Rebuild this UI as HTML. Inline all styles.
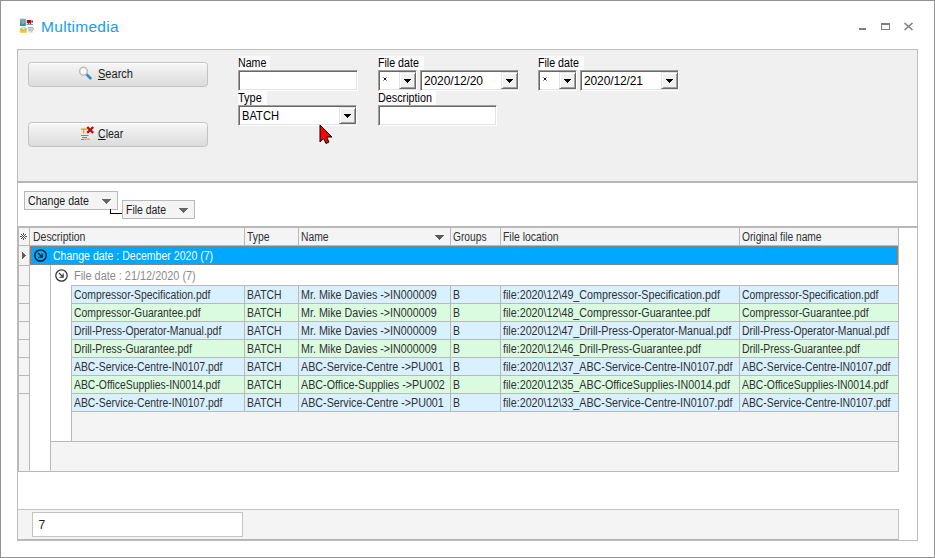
<!DOCTYPE html>
<html><head><meta charset="utf-8">
<style>
*{margin:0;padding:0;box-sizing:border-box}
html,body{width:935px;height:558px;overflow:hidden;background:#fff}
body{position:relative;font-family:"Liberation Sans",sans-serif;font-size:11px;color:#1b1b1b}
.a{position:absolute}
u{text-underline-offset:1px}
.t{position:absolute;white-space:nowrap;line-height:13px}
#win{left:0;top:0;width:935px;height:558px;border:1px solid #939393}
#title{left:41px;top:16.5px;font-size:15.5px;line-height:20px;color:#12a0ea;letter-spacing:0.3px}
.ctl{background:#7f7f7f}
#panel{left:17px;top:49px;width:901px;height:492px;border:1px solid #bdbdbd;background:#fff}
#filter{left:18px;top:50px;width:899px;height:133px;background:#f0f0f0;border-bottom:2px solid #b7b7b7}
.btn{position:absolute;width:180px;height:25px;border:1px solid #c2c2c2;border-radius:3.5px;background:linear-gradient(#f7f7f7,#eaeaea 45%,#dcdcdc);box-shadow:inset 0 1px #fff}
.lbl{position:absolute;white-space:nowrap;background:#fcfcfc;height:14px;line-height:13px;padding-top:1px;color:#000}
.inp{position:absolute;background:#fff;border:1px solid;border-color:#a0a0a0 #fff #fff #a0a0a0;box-shadow:inset 1px 1px #696969,inset -1px -1px #e3e3e3}
.dd{position:absolute;top:1px;right:0;width:17px;height:17px;background:#f0f0f0;border:1px solid;border-color:#e3e3e3 #696969 #696969 #e3e3e3;box-shadow:inset 1px 1px #fff,inset -1px -1px #a0a0a0}
.dd:after{content:"";position:absolute;left:4px;top:6px;width:7px;height:4px;background:linear-gradient(#000,#000) 0 0/7px 1px no-repeat,linear-gradient(#000,#000) 1px 1px/5px 1px no-repeat,linear-gradient(#000,#000) 2px 2px/3px 1px no-repeat,linear-gradient(#000,#000) 3px 3px/1px 1px no-repeat}
.gt{color:#1b1b1b;letter-spacing:-0.25px}
.sc{display:inline-block;font-size:11.5px;transform-origin:0 0}
.gs{color:#303030;font-size:12px;transform-origin:0 0}
.gb{position:absolute;height:19px;background:#f4f4f4;border:1px solid #b9b9b9}
.ar{position:absolute;top:7px;width:9px;height:5px;background:linear-gradient(#666,#666) 0px 0px/9px 1px no-repeat,linear-gradient(#666,#666) 1px 1px/7px 1px no-repeat,linear-gradient(#666,#666) 2px 2px/5px 1px no-repeat,linear-gradient(#666,#666) 3px 3px/3px 1px no-repeat,linear-gradient(#666,#666) 4px 4px/1px 1px no-repeat}
</style></head><body>
<div id="win" class="a"></div>
<!-- title icon -->
<svg class="a" style="left:18px;top:16px" width="20" height="20" viewBox="0 0 20 20">
<defs><linearGradient id="tb" x1="0" y1="0" x2="0" y2="1"><stop offset="0" stop-color="#6ab8e6"/><stop offset="1" stop-color="#2c79bd"/></linearGradient></defs>
<rect x="2" y="2.7" width="5.8" height="7.2" fill="url(#tb)"/><ellipse cx="5" cy="6.2" rx="1.2" ry="2.3" fill="#7cc63a"/>
<rect x="8.8" y="4" width="4.6" height="3.2" fill="#b00808"/><path d="M13.4 5.6 L15 4.2 V7 Z" fill="#b00808"/>
<rect x="10" y="7.2" width="1" height="1" fill="#b00808"/><rect x="12" y="7.2" width="1" height="1" fill="#b00808"/>
<rect x="8.5" y="8.1" width="6.5" height="0.8" fill="#3b8fd0"/>
<rect x="2" y="12.2" width="6.8" height="4.6" fill="#f4c53e"/><path d="M2 12.2 L5.4 14.8 L8.8 12.2" fill="none" stroke="#e0a820" stroke-width="0.6"/>
<circle cx="5.6" cy="12.4" r="1.7" fill="#dfeaf4" stroke="#7fa6cc" stroke-width="0.5"/>
<rect x="9.7" y="11.2" width="5.3" height="5.4" fill="#dde3ea"/><rect x="9.7" y="11.2" width="5.3" height="1" fill="#6eaadc"/>
<rect x="10.5" y="13" width="3" height="0.6" fill="#9ab"/><rect x="10.5" y="14.4" width="3" height="0.6" fill="#9ab"/>
<path d="M15.6 12.5 L13 15.6 L12.6 16.4 L13.5 16 L16.1 13 Z" fill="#f0a830"/><path d="M15.4 12.4 L16.2 13.1" stroke="#c84040" stroke-width="0.8"/>
</svg>
<div id="title" class="t">Multimedia</div>
<div class="a ctl" style="left:859px;top:28px;width:7px;height:2px"></div>
<div class="a" style="left:881px;top:23px;width:9px;height:7px;border:1px solid #7f7f7f;border-top-width:2px"></div>
<svg class="a" style="left:903px;top:22px" width="11" height="9" viewBox="0 0 11 9"><path d="M1.5 1 L9.5 8 M9.5 1 L1.5 8" stroke="#7f7f7f" stroke-width="1.6"/></svg>

<div id="panel" class="a"></div>
<div id="filter" class="a"></div>

<!-- buttons -->
<div class="btn" style="left:28px;top:62px"></div>
<svg class="a" style="left:76px;top:62px" width="20" height="20" viewBox="0 0 20 20">
<circle cx="7.5" cy="9.2" r="3.9" fill="#f7f8f9" stroke="#bdbdbd" stroke-width="1.6"/>
<path d="M10.6 12.4 L15.2 17" stroke="#2f8ec4" stroke-width="2.6"/></svg>
<div class="t" style="left:98px;top:68px;color:#1b1b1b"><span class="sc" style="transform:scaleX(0.92);font-size:12px"><u>S</u>earch</span></div>
<div class="btn" style="left:28px;top:122px"></div>
<svg class="a" style="left:80px;top:125px" width="16" height="16" viewBox="0 0 16 16">
<rect x="0.5" y="3" width="10.5" height="12" fill="#e6eaee"/>
<rect x="1" y="3.5" width="6.5" height="1.4" fill="#f0a020"/><rect x="3" y="4.5" width="1.3" height="4" fill="#f0a020"/>
<rect x="1" y="10" width="7.5" height="1" fill="#3d97d8"/><rect x="2" y="12" width="5" height="1" fill="#3d97d8"/>
<rect x="1" y="14" width="3" height="1" fill="#3d97d8"/><rect x="4" y="13.5" width="6" height="1.5" fill="#f0b030"/>
<path d="M7.2 2 L13.2 7.8 M13.2 2 L7.2 7.8" stroke="#b81414" stroke-width="2.4"/></svg>
<div class="t" style="left:98px;top:128px;color:#1b1b1b"><span class="sc" style="transform:scaleX(0.88);font-size:12px"><u>C</u>lear</span></div>

<!-- labels & inputs -->
<div class="lbl" style="left:238px;top:56px;width:32px"><span class="sc" style="transform:scaleX(0.887);font-size:12px">Name</span></div>
<div class="inp" style="left:238px;top:70px;width:120px;height:21px"></div>
<div class="lbl" style="left:238px;top:91px;width:29px"><span class="sc" style="transform:scaleX(0.915);font-size:12px">Type</span></div>
<div class="inp" style="left:238px;top:105px;width:119px;height:21px"><div class="t" style="left:3px;top:4px;color:#000"><span class="sc" style="transform:scaleX(0.93);font-size:12px">BATCH</span></div><div class="dd"></div></div>

<div class="lbl" style="left:378px;top:56px;width:46px"><span class="sc" style="transform:scaleX(0.887);font-size:12px">File date</span></div>
<div class="inp" style="left:378px;top:70px;width:39px;height:21px"><svg class="a" style="left:4px;top:6px" width="4" height="4" viewBox="0 0 4 4"><path d="M0.5 0.5L3.5 3.5M3.5 0.5L0.5 3.5" stroke="#000" stroke-width="0.9"/></svg><div class="dd"></div></div>
<div class="inp" style="left:420px;top:70px;width:99px;height:21px"><div class="t" style="left:3px;top:3.5px;color:#000;font-size:12px;letter-spacing:-0.12px">2020/12/20</div><div class="dd"></div></div>
<div class="lbl" style="left:378px;top:91px;width:58px"><span class="sc" style="transform:scaleX(0.90);font-size:12px">Description</span></div>
<div class="inp" style="left:378px;top:105px;width:119px;height:21px"></div>

<div class="lbl" style="left:538px;top:56px;width:46px"><span class="sc" style="transform:scaleX(0.887);font-size:12px">File date</span></div>
<div class="inp" style="left:538px;top:70px;width:39px;height:21px"><svg class="a" style="left:4px;top:6px" width="4" height="4" viewBox="0 0 4 4"><path d="M0.5 0.5L3.5 3.5M3.5 0.5L0.5 3.5" stroke="#000" stroke-width="0.9"/></svg><div class="dd"></div></div>
<div class="inp" style="left:580px;top:70px;width:99px;height:21px"><div class="t" style="left:3px;top:3.5px;color:#000;font-size:12px;letter-spacing:-0.12px">2020/12/21</div><div class="dd"></div></div>

<!-- cursor -->
<svg class="a" style="left:319px;top:124px" width="16" height="21" viewBox="0 0 16 21">
<path d="M1 1 L13 13 L7.5 13 L10 18 L7 19.5 L4.5 14.5 L1 18 Z" fill="#ff0000" stroke="#000" stroke-width="1"/></svg>

<!-- group by -->
<div class="gb" style="left:24px;top:191px;width:94px"><i class="ar" style="left:77px"></i><div class="t" style="left:3px;top:3px"><span class="sc" style="transform:scaleX(0.885);font-size:12px">Change date</span></div></div>
<div class="a" style="left:110px;top:209px;width:13px;height:5px;border-left:1px solid #000;border-bottom:1px solid #000"></div>
<div class="gb" style="left:122px;top:200px;width:73px"><i class="ar" style="left:56px"></i><div class="t" style="left:3px;top:3px"><span class="sc" style="transform:scaleX(0.87);font-size:12px">File date</span></div></div>

<!-- grid placeholder -->
<!-- GRID START -->
<div class="a" style="left:17px;top:226px;width:901px;height:2px;background:#b9b9b9"></div>
<div class="a" style="left:17px;top:226px;width:2px;height:246px;background:#b9b9b9"></div>
<div class="a" style="left:19px;top:228px;width:880px;height:18px;background:#b9b9b9"></div>
<div class="a" style="left:19px;top:228px;width:10px;height:17px;background:#f4f4f4"></div>
<div class="a" style="left:30px;top:228px;width:214px;height:17px;background:#f4f4f4"></div>
<div class="a" style="left:245px;top:228px;width:53px;height:17px;background:#f4f4f4"></div>
<div class="a" style="left:299px;top:228px;width:151px;height:17px;background:#f4f4f4"></div>
<div class="a" style="left:451px;top:228px;width:49px;height:17px;background:#f4f4f4"></div>
<div class="a" style="left:501px;top:228px;width:238px;height:17px;background:#f4f4f4"></div>
<div class="a" style="left:740px;top:228px;width:158px;height:17px;background:#f4f4f4"></div>
<div class="t gs" style="left:33px;top:231px;transform:scaleX(0.8727);">Description</div>
<div class="t gs" style="left:247px;top:231px;transform:scaleX(0.8621);">Type</div>
<div class="t gs" style="left:301px;top:231px;transform:scaleX(0.8616);">Name</div>
<div class="t gs" style="left:453px;top:231px;transform:scaleX(0.8513);">Groups</div>
<div class="t gs" style="left:503px;top:231px;transform:scaleX(0.8657);">File location</div>
<div class="t gs" style="left:742px;top:231px;transform:scaleX(0.8519);">Original file name</div>
<i class="a" style="left:435px;top:235px;width:9px;height:5px;background:linear-gradient(#5a5a5a,#5a5a5a) 0px 0px/9px 1px no-repeat,linear-gradient(#5a5a5a,#5a5a5a) 1px 1px/7px 1px no-repeat,linear-gradient(#5a5a5a,#5a5a5a) 2px 2px/5px 1px no-repeat,linear-gradient(#5a5a5a,#5a5a5a) 3px 3px/3px 1px no-repeat,linear-gradient(#5a5a5a,#5a5a5a) 4px 4px/1px 1px no-repeat"></i>
<svg class="a" style="left:20px;top:233px" width="7" height="7" viewBox="0 0 7 7" fill="#505050"><rect x="3" y="0" width="1" height="1"/><rect x="1" y="1" width="1" height="1"/><rect x="3" y="1" width="1" height="1"/><rect x="5" y="1" width="1" height="1"/><rect x="2" y="2" width="1" height="1"/><rect x="4" y="2" width="1" height="1"/><rect x="0" y="3" width="1" height="1"/><rect x="1" y="3" width="1" height="1"/><rect x="3" y="3" width="1" height="1"/><rect x="5" y="3" width="1" height="1"/><rect x="6" y="3" width="1" height="1"/><rect x="2" y="4" width="1" height="1"/><rect x="4" y="4" width="1" height="1"/><rect x="1" y="5" width="1" height="1"/><rect x="3" y="5" width="1" height="1"/><rect x="5" y="5" width="1" height="1"/><rect x="3" y="6" width="1" height="1"/></svg>
<div class="a" style="left:19px;top:246px;width:11px;height:225px;background:#b9b9b9"></div>
<div class="a" style="left:19px;top:246px;width:10px;height:19px;background:#f4f4f4"></div>
<div class="a" style="left:19px;top:266px;width:10px;height:19px;background:#f4f4f4"></div>
<div class="a" style="left:19px;top:286px;width:10px;height:17px;background:#f4f4f4"></div>
<div class="a" style="left:19px;top:304px;width:10px;height:17px;background:#f4f4f4"></div>
<div class="a" style="left:19px;top:322px;width:10px;height:17px;background:#f4f4f4"></div>
<div class="a" style="left:19px;top:340px;width:10px;height:17px;background:#f4f4f4"></div>
<div class="a" style="left:19px;top:358px;width:10px;height:17px;background:#f4f4f4"></div>
<div class="a" style="left:19px;top:376px;width:10px;height:17px;background:#f4f4f4"></div>
<div class="a" style="left:19px;top:394px;width:10px;height:77px;background:#f4f4f4"></div>
<i class="a" style="left:22px;top:252px;width:4px;height:7px;background:linear-gradient(#5f5f5f,#5f5f5f) 0px 0px/1px 1px no-repeat,linear-gradient(#5f5f5f,#5f5f5f) 0px 1px/2px 1px no-repeat,linear-gradient(#5f5f5f,#5f5f5f) 0px 2px/3px 1px no-repeat,linear-gradient(#5f5f5f,#5f5f5f) 0px 3px/4px 1px no-repeat,linear-gradient(#5f5f5f,#5f5f5f) 0px 4px/3px 1px no-repeat,linear-gradient(#5f5f5f,#5f5f5f) 0px 5px/2px 1px no-repeat,linear-gradient(#5f5f5f,#5f5f5f) 0px 6px/1px 1px no-repeat"></i>
<div class="a" style="left:30px;top:246px;width:868px;height:19px;background:#00a8ff;border:1px dotted #f26a1b"></div>
<div class="a" style="left:30px;top:265px;width:868px;height:206px;background:#fff"></div>
<div class="a" style="left:50px;top:265px;width:1px;height:206px;background:#b9b9b9"></div>
<svg class="a" style="left:34px;top:249px" width="14" height="14" viewBox="0 0 14 14"><circle cx="6.5" cy="6.5" r="5.7" fill="none" stroke="#0a0a0a" stroke-width="1.25"/><path d="M4 4 L8 8 M8.2 4.6 V8.3 H4.4" fill="none" stroke="#0a0a0a" stroke-width="1.1"/></svg>
<div class="t gs" style="left:53px;top:250px;transform:scaleX(0.8791);color:#fff">Change date : December 2020 (7)</div>
<svg class="a" style="left:55px;top:269px" width="14" height="14" viewBox="0 0 14 14"><circle cx="6.5" cy="6.5" r="5.7" fill="none" stroke="#333" stroke-width="1.25"/><path d="M4 4 L8 8 M8.2 4.6 V8.3 H4.4" fill="none" stroke="#333" stroke-width="1.1"/></svg>
<div class="t gs" style="left:74px;top:270px;transform:scaleX(0.9078);color:#8a8a8a">File date : 21/12/2020 (7)</div>
<div class="a" style="left:71px;top:285px;width:828px;height:187px;background:#b9b9b9"></div>
<div class="a" style="left:72px;top:286px;width:172px;height:17px;background:#d9f0ff"></div>
<div class="t gs" style="left:74px;top:289px;transform:scaleX(0.8663);">Compressor-Specification.pdf</div>
<div class="a" style="left:245px;top:286px;width:53px;height:17px;background:#d9f0ff"></div>
<div class="t gs" style="left:247px;top:289px;transform:scaleX(0.8691);">BATCH</div>
<div class="a" style="left:299px;top:286px;width:151px;height:17px;background:#d9f0ff"></div>
<div class="t gs" style="left:301px;top:289px;transform:scaleX(0.8940);">Mr. Mike Davies ->IN000009</div>
<div class="a" style="left:451px;top:286px;width:49px;height:17px;background:#d9f0ff"></div>
<div class="t gs" style="left:453px;top:289px;transform:scaleX(0.8721);">B</div>
<div class="a" style="left:501px;top:286px;width:238px;height:17px;background:#d9f0ff"></div>
<div class="t gs" style="left:503px;top:289px;transform:scaleX(0.8936);">file:2020\12\49_Compressor-Specification.pdf</div>
<div class="a" style="left:740px;top:286px;width:158px;height:17px;background:#d9f0ff"></div>
<div class="t gs" style="left:742px;top:289px;transform:scaleX(0.8663);">Compressor-Specification.pdf</div>
<div class="a" style="left:72px;top:304px;width:172px;height:17px;background:#dbfbe1"></div>
<div class="t gs" style="left:74px;top:307px;transform:scaleX(0.8665);">Compressor-Guarantee.pdf</div>
<div class="a" style="left:245px;top:304px;width:53px;height:17px;background:#dbfbe1"></div>
<div class="t gs" style="left:247px;top:307px;transform:scaleX(0.8691);">BATCH</div>
<div class="a" style="left:299px;top:304px;width:151px;height:17px;background:#dbfbe1"></div>
<div class="t gs" style="left:301px;top:307px;transform:scaleX(0.8940);">Mr. Mike Davies ->IN000009</div>
<div class="a" style="left:451px;top:304px;width:49px;height:17px;background:#dbfbe1"></div>
<div class="t gs" style="left:453px;top:307px;transform:scaleX(0.8721);">B</div>
<div class="a" style="left:501px;top:304px;width:238px;height:17px;background:#dbfbe1"></div>
<div class="t gs" style="left:503px;top:307px;transform:scaleX(0.8937);">file:2020\12\48_Compressor-Guarantee.pdf</div>
<div class="a" style="left:740px;top:304px;width:158px;height:17px;background:#dbfbe1"></div>
<div class="t gs" style="left:742px;top:307px;transform:scaleX(0.8665);">Compressor-Guarantee.pdf</div>
<div class="a" style="left:72px;top:322px;width:172px;height:17px;background:#d9f0ff"></div>
<div class="t gs" style="left:74px;top:325px;transform:scaleX(0.8660);">Drill-Press-Operator-Manual.pdf</div>
<div class="a" style="left:245px;top:322px;width:53px;height:17px;background:#d9f0ff"></div>
<div class="t gs" style="left:247px;top:325px;transform:scaleX(0.8691);">BATCH</div>
<div class="a" style="left:299px;top:322px;width:151px;height:17px;background:#d9f0ff"></div>
<div class="t gs" style="left:301px;top:325px;transform:scaleX(0.8940);">Mr. Mike Davies ->IN000009</div>
<div class="a" style="left:451px;top:322px;width:49px;height:17px;background:#d9f0ff"></div>
<div class="t gs" style="left:453px;top:325px;transform:scaleX(0.8721);">B</div>
<div class="a" style="left:501px;top:322px;width:238px;height:17px;background:#d9f0ff"></div>
<div class="t gs" style="left:503px;top:325px;transform:scaleX(0.8933);">file:2020\12\47_Drill-Press-Operator-Manual.pdf</div>
<div class="a" style="left:740px;top:322px;width:158px;height:17px;background:#d9f0ff"></div>
<div class="t gs" style="left:742px;top:325px;transform:scaleX(0.8660);">Drill-Press-Operator-Manual.pdf</div>
<div class="a" style="left:72px;top:340px;width:172px;height:17px;background:#dbfbe1"></div>
<div class="t gs" style="left:74px;top:343px;transform:scaleX(0.8662);">Drill-Press-Guarantee.pdf</div>
<div class="a" style="left:245px;top:340px;width:53px;height:17px;background:#dbfbe1"></div>
<div class="t gs" style="left:247px;top:343px;transform:scaleX(0.8691);">BATCH</div>
<div class="a" style="left:299px;top:340px;width:151px;height:17px;background:#dbfbe1"></div>
<div class="t gs" style="left:301px;top:343px;transform:scaleX(0.8940);">Mr. Mike Davies ->IN000009</div>
<div class="a" style="left:451px;top:340px;width:49px;height:17px;background:#dbfbe1"></div>
<div class="t gs" style="left:453px;top:343px;transform:scaleX(0.8721);">B</div>
<div class="a" style="left:501px;top:340px;width:238px;height:17px;background:#dbfbe1"></div>
<div class="t gs" style="left:503px;top:343px;transform:scaleX(0.8935);">file:2020\12\46_Drill-Press-Guarantee.pdf</div>
<div class="a" style="left:740px;top:340px;width:158px;height:17px;background:#dbfbe1"></div>
<div class="t gs" style="left:742px;top:343px;transform:scaleX(0.8662);">Drill-Press-Guarantee.pdf</div>
<div class="a" style="left:72px;top:358px;width:172px;height:17px;background:#d9f0ff"></div>
<div class="t gs" style="left:74px;top:361px;transform:scaleX(0.8663);">ABC-Service-Centre-IN0107.pdf</div>
<div class="a" style="left:245px;top:358px;width:53px;height:17px;background:#d9f0ff"></div>
<div class="t gs" style="left:247px;top:361px;transform:scaleX(0.8691);">BATCH</div>
<div class="a" style="left:299px;top:358px;width:151px;height:17px;background:#d9f0ff"></div>
<div class="t gs" style="left:301px;top:361px;transform:scaleX(0.8939);">ABC-Service-Centre ->PU001</div>
<div class="a" style="left:451px;top:358px;width:49px;height:17px;background:#d9f0ff"></div>
<div class="t gs" style="left:453px;top:361px;transform:scaleX(0.8721);">B</div>
<div class="a" style="left:501px;top:358px;width:238px;height:17px;background:#d9f0ff"></div>
<div class="t gs" style="left:503px;top:361px;transform:scaleX(0.8936);">file:2020\12\37_ABC-Service-Centre-IN0107.pdf</div>
<div class="a" style="left:740px;top:358px;width:158px;height:17px;background:#d9f0ff"></div>
<div class="t gs" style="left:742px;top:361px;transform:scaleX(0.8663);">ABC-Service-Centre-IN0107.pdf</div>
<div class="a" style="left:72px;top:376px;width:172px;height:17px;background:#dbfbe1"></div>
<div class="t gs" style="left:74px;top:379px;transform:scaleX(0.8666);">ABC-OfficeSupplies-IN0014.pdf</div>
<div class="a" style="left:245px;top:376px;width:53px;height:17px;background:#dbfbe1"></div>
<div class="t gs" style="left:247px;top:379px;transform:scaleX(0.8691);">BATCH</div>
<div class="a" style="left:299px;top:376px;width:151px;height:17px;background:#dbfbe1"></div>
<div class="t gs" style="left:301px;top:379px;transform:scaleX(0.8941);">ABC-Office-Supplies ->PU002</div>
<div class="a" style="left:451px;top:376px;width:49px;height:17px;background:#dbfbe1"></div>
<div class="t gs" style="left:453px;top:379px;transform:scaleX(0.8721);">B</div>
<div class="a" style="left:501px;top:376px;width:238px;height:17px;background:#dbfbe1"></div>
<div class="t gs" style="left:503px;top:379px;transform:scaleX(0.8937);">file:2020\12\35_ABC-OfficeSupplies-IN0014.pdf</div>
<div class="a" style="left:740px;top:376px;width:158px;height:17px;background:#dbfbe1"></div>
<div class="t gs" style="left:742px;top:379px;transform:scaleX(0.8666);">ABC-OfficeSupplies-IN0014.pdf</div>
<div class="a" style="left:72px;top:394px;width:172px;height:17px;background:#d9f0ff"></div>
<div class="t gs" style="left:74px;top:397px;transform:scaleX(0.8663);">ABC-Service-Centre-IN0107.pdf</div>
<div class="a" style="left:245px;top:394px;width:53px;height:17px;background:#d9f0ff"></div>
<div class="t gs" style="left:247px;top:397px;transform:scaleX(0.8691);">BATCH</div>
<div class="a" style="left:299px;top:394px;width:151px;height:17px;background:#d9f0ff"></div>
<div class="t gs" style="left:301px;top:397px;transform:scaleX(0.8939);">ABC-Service-Centre ->PU001</div>
<div class="a" style="left:451px;top:394px;width:49px;height:17px;background:#d9f0ff"></div>
<div class="t gs" style="left:453px;top:397px;transform:scaleX(0.8721);">B</div>
<div class="a" style="left:501px;top:394px;width:238px;height:17px;background:#d9f0ff"></div>
<div class="t gs" style="left:503px;top:397px;transform:scaleX(0.8936);">file:2020\12\33_ABC-Service-Centre-IN0107.pdf</div>
<div class="a" style="left:740px;top:394px;width:158px;height:17px;background:#d9f0ff"></div>
<div class="t gs" style="left:742px;top:397px;transform:scaleX(0.8663);">ABC-Service-Centre-IN0107.pdf</div>
<div class="a" style="left:72px;top:412px;width:826px;height:29px;background:#f4f4f4"></div>
<div class="a" style="left:50px;top:441px;width:849px;height:31px;background:#b9b9b9"></div>
<div class="a" style="left:51px;top:442px;width:847px;height:29px;background:#f4f4f4"></div>
<div class="a" style="left:898px;top:228px;width:1px;height:244px;background:#b9b9b9"></div>
<div class="a" style="left:19px;top:471px;width:880px;height:1px;background:#b9b9b9"></div>
<!-- GRID END -->

<!-- footer -->
<div class="a" style="left:18px;top:509px;width:881px;height:31px;background:#f4f4f4;border-top:1px solid #c3c3c3;border-right:1px solid #c3c3c3;border-bottom:1px solid #b4b4b4"></div>
<div class="a" style="left:32px;top:512px;width:211px;height:25px;background:#fff;border:1px solid #c3c3c3"></div>
<div class="t" style="left:38.5px;top:519px;font-size:12px">7</div>
</body></html>
